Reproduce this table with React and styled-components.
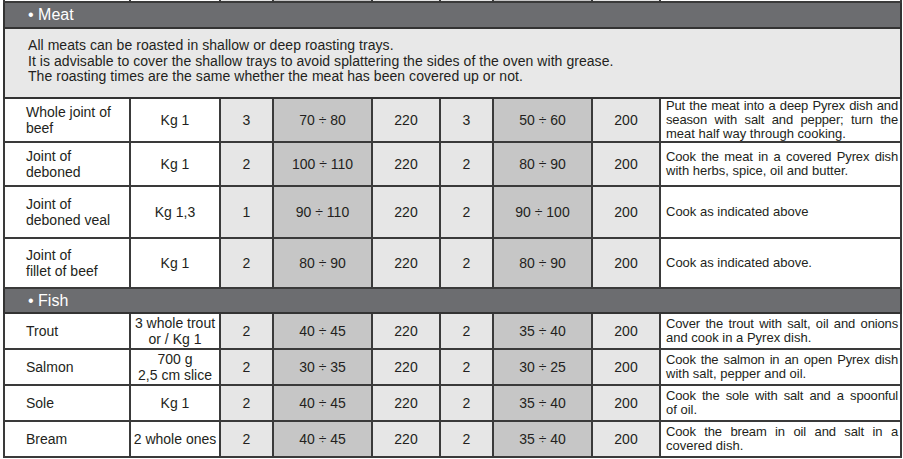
import React from "react";
import styled, { createGlobalStyle } from "styled-components";

const GlobalStyle = createGlobalStyle`
  html, body { margin: 0; padding: 0; background: #ffffff; }
  body { font-family: "Liberation Sans", Arial, sans-serif; color: #231f20; }
`;

const Page = styled.div`
  width: 903px;
  height: 459px;
  overflow: hidden;
  padding-left: 3px;
  box-sizing: border-box;
`;

const Table = styled.table`
  width: 899px;
  table-layout: fixed;
  border-collapse: collapse;
  font-size: 14px;
  line-height: 16px;
`;

const tones = {
  white: "#ffffff",
  light: "#e6e6e6",
  dark: "#c6c6c6",
};

const Cell = styled.td`
  border: 2px solid #3a3a3a;
  background: ${(p) => tones[p.$tone || "white"]};
  text-align: ${(p) => p.$align || "center"};
  vertical-align: middle;
  padding: ${(p) => (p.$align === "left" ? "0 0 0 21px" : "0")};
  height: ${(p) => p.$h}px;
  white-space: nowrap;
`;

const SliverCell = styled.td`
  border-left: 2px solid #3a3a3a;
  border-right: 2px solid #3a3a3a;
  border-bottom: 2px solid #3a3a3a;
  border-top: none;
  background: ${(p) => tones[p.$tone || "white"]};
  height: 1px;
  padding: 0;
  font-size: 0;
  line-height: 0;
`;

const SectionCell = styled.td`
  border: 2px solid #333333;
  background: #6c6d70;
  color: #ffffff;
  font-size: 16px;
  line-height: 18px;
  height: ${(p) => p.$h}px;
  padding: 0 0 0 23px;
  vertical-align: middle;
`;

const IntroCell = styled.td`
  border: 2px solid #333333;
  background: #e8e8e8;
  height: 70px;
  padding: 9px 0 0 23px;
  vertical-align: top;
  box-sizing: border-box;
  font-size: 14px;
  line-height: 15.5px;
  letter-spacing: 0.05px;
`;

const DescCell = styled.td`
  border: 2px solid #3a3a3a;
  background: #ffffff;
  height: ${(p) => p.$h}px;
  padding: 0 2px 0 5px;
  vertical-align: ${(p) => (p.$top ? "top" : "middle")};
  font-size: 13px;
  line-height: 14px;
`;

const DescLine = styled.div`
  white-space: nowrap;
  letter-spacing: ${(p) => (p.$justify ? "-0.15px" : "0")};
  text-align: ${(p) => (p.$justify ? "justify" : "left")};
  text-align-last: ${(p) => (p.$justify ? "justify" : "left")};
`;

const columnTones = ["white", "white", "light", "dark", "light", "light", "dark", "light", "white"];
const colWidths = [126, 90, 53, 99, 68, 53, 99, 68, null];

const meatRows = [
  {
    h: 42,
    name: ["Whole joint of", "beef"],
    qty: ["Kg 1"],
    v: ["3", "70 ÷ 80", "220", "3", "50 ÷ 60", "200"],
    desc: ["Put the meat into a deep Pyrex dish and", "season with salt and pepper; turn the", "meat half way through cooking."],
    top: true,
  },
  {
    h: 42,
    name: ["Joint of", "deboned"],
    qty: ["Kg 1"],
    v: ["2", "100 ÷ 110", "220", "2", "80 ÷ 90", "200"],
    desc: ["Cook the meat in a covered Pyrex dish", "with herbs, spice, oil and butter."],
  },
  {
    h: 50,
    name: ["Joint of", "deboned veal"],
    qty: ["Kg 1,3"],
    v: ["1", "90 ÷ 110", "220", "2", "90 ÷ 100", "200"],
    desc: ["Cook as indicated above"],
  },
  {
    h: 48,
    name: ["Joint of", "fillet of beef"],
    qty: ["Kg 1"],
    v: ["2", "80 ÷ 90", "220", "2", "80 ÷ 90", "200"],
    desc: ["Cook as indicated above."],
  },
];

const fishRows = [
  {
    h: 34,
    name: ["Trout"],
    qty: ["3 whole trout", "or / Kg 1"],
    v: ["2", "40 ÷ 45", "220", "2", "35 ÷ 40", "200"],
    desc: ["Cover the trout with salt, oil and onions", "and cook in a Pyrex dish."],
  },
  {
    h: 34,
    name: ["Salmon"],
    qty: ["700 g", "2,5 cm slice"],
    v: ["2", "30 ÷ 35", "220", "2", "30 ÷ 25", "200"],
    desc: ["Cook the salmon in an open Pyrex dish", "with salt, pepper and oil."],
  },
  {
    h: 34,
    name: ["Sole"],
    qty: ["Kg 1"],
    v: ["2", "40 ÷ 45", "220", "2", "35 ÷ 40", "200"],
    desc: ["Cook the sole with salt and a spoonful", "of oil."],
  },
  {
    h: 34,
    name: ["Bream"],
    qty: ["2 whole ones"],
    v: ["2", "40 ÷ 45", "220", "2", "35 ÷ 40", "200"],
    desc: ["Cook the bream in oil and salt in a", "covered dish."],
  },
];

const Lines = ({ lines }) =>
  lines.map((l, i) => (
    <React.Fragment key={i}>
      {i > 0 && <br />}
      {l}
    </React.Fragment>
  ));

const DataRow = ({ row }) => (
  <tr>
    <Cell $align="left" $h={row.h}>
      <Lines lines={row.name} />
    </Cell>
    <Cell $h={row.h}>
      <Lines lines={row.qty} />
    </Cell>
    {row.v.map((val, i) => (
      <Cell key={i} $tone={columnTones[i + 2]} $h={row.h}>
        {val}
      </Cell>
    ))}
    <DescCell $h={row.h} $top={row.top}>
      {row.desc.map((l, i) => (
        <DescLine key={i} $justify={i < row.desc.length - 1}>
          {l}
        </DescLine>
      ))}
    </DescCell>
  </tr>
);

const Section = ({ title, h }) => (
  <tr>
    <SectionCell colSpan={9} $h={h}>• {title}</SectionCell>
  </tr>
);

export default function App() {
  return (
    <>
      <GlobalStyle />
      <Page>
        <Table>
          <colgroup>
            {colWidths.map((w, i) => (
              <col key={i} style={w ? { width: `${w}px` } : undefined} />
            ))}
          </colgroup>
          <tbody>
            <tr>
              {columnTones.map((t, i) => (
                <SliverCell key={i} $tone={t} />
              ))}
            </tr>
            <Section title="Meat" h={24} />
            <tr>
              <IntroCell colSpan={9}>
                All meats can be roasted in shallow or deep roasting trays.
                <br />
                It is advisable to cover the shallow trays to avoid splattering the sides of the oven with grease.
                <br />
                The roasting times are the same whether the meat has been covered up or not.
              </IntroCell>
            </tr>
            {meatRows.map((r, i) => (
              <DataRow key={i} row={r} />
            ))}
            <Section title="Fish" h={23} />
            {fishRows.map((r, i) => (
              <DataRow key={i} row={r} />
            ))}
          </tbody>
        </Table>
      </Page>
    </>
  );
}
